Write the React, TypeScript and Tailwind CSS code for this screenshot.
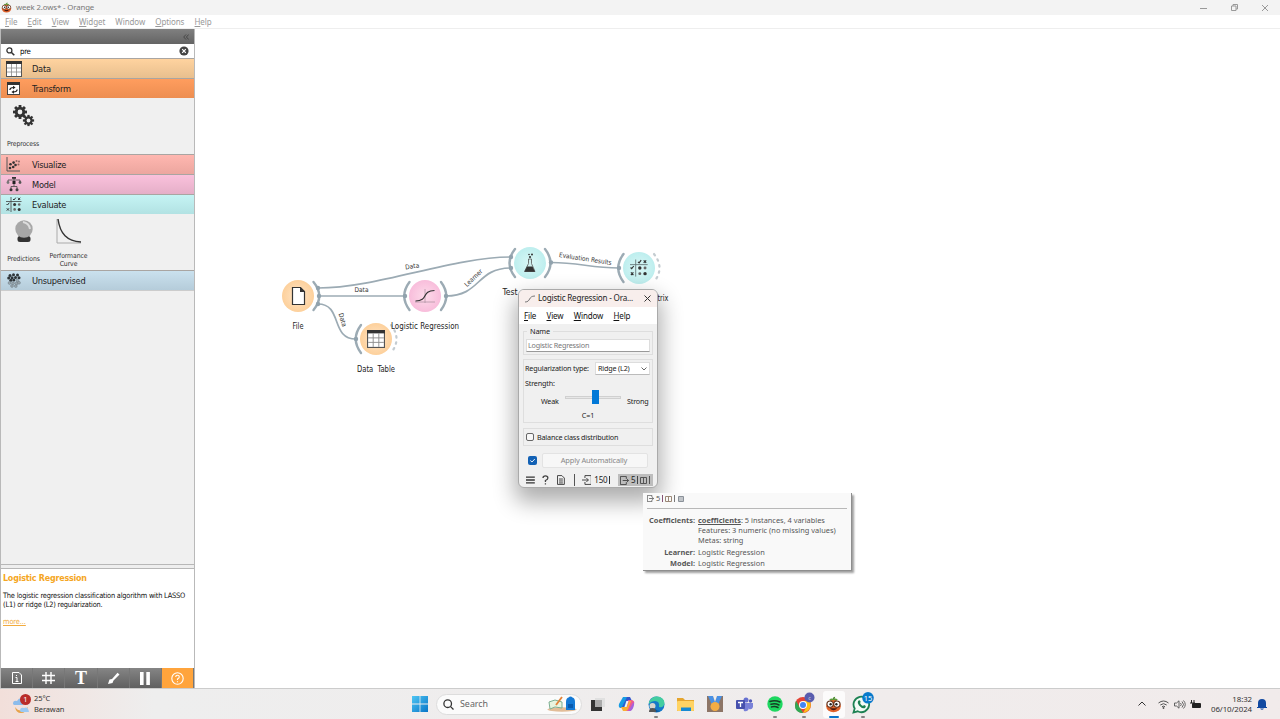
import React from "react";

const inkColor = "#333333";

function PumpkinLogo({ size }: { size: number }) {
  return (
    <svg width={size} height={size} viewBox="0 0 20 20" className="shrink-0">
      <path d="M9 4 Q9 1 12 1 L11 5 Z" fill="#4b8a2f" />
      <path d="M5 4 Q8 2 10 4 Q12 2 15 4 L13 6 H7 Z" fill="#5c9a3a" />
      <ellipse cx="10" cy="12" rx="8.6" ry="7.2" fill="#e0622a" />
      <circle cx="6" cy="9.5" r="3.7" fill="#fff" stroke="#5a2c18" strokeWidth="1.3" />
      <circle cx="14" cy="9.5" r="3.7" fill="#fff" stroke="#5a2c18" strokeWidth="1.3" />
      <circle cx="6.6" cy="9.7" r="1.4" fill="#222" />
      <circle cx="13.4" cy="9.7" r="1.4" fill="#222" />
      <path d="M5.5 14.5 Q10 19 14.5 14.5 Z" fill="#4a1a10" />
    </svg>
  );
}

function TableIcon({ size }: { size: number }) {
  return (
    <svg width={size} height={size} viewBox="0 0 16 16">
      <rect x=".5" y=".5" width="15" height="15" fill="#fff" stroke="#555" />
      <rect x="0" y="0" width="16" height="3" fill="#333" />
      <path d="M5.5 3V15M10.5 3V15M1 7H15M1 11H15" stroke="#8a8a8a" strokeWidth=".8" />
    </svg>
  );
}

function TransformIcon() {
  return (
    <svg width="13" height="13" viewBox="0 0 13 13">
      <rect x=".5" y=".5" width="12" height="12" fill="#fff" stroke="#444" />
      <rect width="13" height="3" fill="#333" />
      <path d="M2.800 8Q3 5.600 6.500 5.500M10.200 7.500Q10 9.900 6.500 10" fill="none" stroke="#222" strokeWidth="1.2" />
      <path d="M6 3.800L8.600 5.500L6 7.200ZM7 8.300L4.400 10L7 11.700Z" fill="#222" />
    </svg>
  );
}

function VisualizeIcon() {
  return (
    <svg width="15" height="15" viewBox="0 0 15 15">
      <path d="M1 0V14H14" fill="none" stroke="#555" strokeWidth="1" />
      {[[4, 11], [4.5, 7.3], [7.2, 10], [7.6, 5.6], [9.5, 8]].map(([x, y]) => (
        <circle key={`${x}${y}`} cx={x} cy={y} r="1.3" fill="#333" />
      ))}
      {[[10.5, 4], [13, 4.5], [12.5, 7.5]].map(([x, y]) => (
        <circle key={`${x}${y}`} cx={x} cy={y} r="1" fill="#8b6663" />
      ))}
    </svg>
  );
}

function ModelIcon() {
  return (
    <svg width="16" height="15" viewBox="0 0 16 15">
      <path d="M8 1V5M2 5V3H14V5M8 6V9M5 12V9.5H11V12" fill="none" stroke="#444" strokeWidth=".8" />
      <rect x="6" y="0" width="4" height="1.800" fill="#333" />
      <circle cx="2" cy="5.500" r="1.400" fill="#777" />
      <rect x="6.500" y="4" width="3" height="3" fill="#222" />
      <circle cx="14" cy="5.500" r="1.400" fill="#555" />
      <circle cx="5" cy="12.700" r="1.500" fill="#333" />
      <circle cx="11" cy="12.700" r="1.500" fill="#444" />
    </svg>
  );
}

function ConfusionGlyph({ framed = false }: { framed?: boolean }) {
  return (
    <g fill="none" stroke="#333" strokeWidth="1">
      <path d="M5 0V15M0 4.500H15.500" stroke={framed ? "#66797a" : "#444"} strokeWidth=".8" />
      <path d="M7 2L8 3L9.800 .6M.5 7L1.500 8L3.300 5.700M12 .7L14.200 3M14.200 .7L12 3M.8 11.300L3 13.600M3 11.300L.8 13.600" />
      <g fill="#333" stroke="none">
        <circle cx="8.600" cy="7.500" r="1.500" />
        <circle cx="13.200" cy="7.500" r="1.300" fill="#666" />
        <circle cx="8.600" cy="12.400" r="1.300" fill="#666" />
        <circle cx="13.200" cy="12.400" r="1.500" />
      </g>
    </g>
  );
}

function EvaluateIcon() {
  return (
    <svg width="16" height="15" viewBox="0 0 16 15">
      <ConfusionGlyph />
    </svg>
  );
}

function UnsupervisedIcon() {
  return (
    <svg width="14" height="15" viewBox="0 0 14 15">
      {[[3, 2.5], [6.5, 1.7], [10.5, 2], [1.7, 5], [5, 4.7], [8.5, 4.5], [12, 4.8], [6.8, 7], [3.8, 7.2]].map(([x, y]) => (
        <circle key={`${x}-${y}`} cx={x} cy={y} r="1.5" fill="#2e3438" />
      ))}
      {[[10.3, 7.6], [2.5, 10], [6, 10.2], [9.5, 10.5], [12, 9.8], [5, 13], [8.8, 13.1]].map(([x, y]) => (
        <circle key={`${x}-${y}`} cx={x} cy={y} r="1.4" fill="#9aa8b0" stroke="#69757c" strokeWidth=".5" />
      ))}
    </svg>
  );
}

function Gear({ cx, cy, r }: { cx: number; cy: number; r: number }) {
  return (
    <g transform={`translate(${cx} ${cy})`} fill="#333">
      {[0, 45, 90, 135].map((a) => (
        <rect key={a} x={-r * 0.2} y={-r} width={r * 0.4} height={r * 2} transform={`rotate(${a})`} />
      ))}
      <circle r={r * 0.74} />
      <circle r={r * 0.34} fill="#f0f0f0" />
    </g>
  );
}

function CategoryRow({ label, icon, tone }: { label: string; icon: React.ReactNode; tone: string }) {
  return (
    <div className={`flex h-5 shrink-0 items-center border-t border-[#a9a5a2] ${tone}`}>
      <div className="flex w-[25px] justify-center">{icon}</div>
      <span className="pl-[6px] text-[9.2px] tracking-[-0.25px] text-[#222]">{label}</span>
    </div>
  );
}

function MenuWord({ word, underline = true }: { word: string; underline?: boolean }) {
  return (
    <span className="whitespace-nowrap">
      <span className={underline ? "underline underline-offset-1" : ""}>{word[0]}</span>
      {word.slice(1)}
    </span>
  );
}

function Sidebar() {
  return (
    <aside className="flex w-[195px] shrink-0 flex-col border-x border-[#b9b9b9] bg-[#f0f0f0]">
      <div className="flex h-[15px] shrink-0 items-center justify-end bg-linear-to-b from-[#808080] to-[#646464] pr-[5px]">
        <svg width="6" height="6" viewBox="0 0 6 6" fill="none" stroke="#424242" strokeWidth=".9"><path d="M3 .5L.7 3L3 5.500M5.700 .5L3.400 3L5.700 5.500" /></svg>
      </div>
      <div className="flex h-[14px] shrink-0 items-center bg-white pr-[5px] pl-[5px]">
        <svg width="9" height="9" viewBox="0 0 9 9"><circle cx="3.400" cy="3.400" r="2.500" fill="none" stroke="#333" strokeWidth="1.300" /><path d="M5.200 5.200L8.300 8.300" stroke="#333" strokeWidth="1.600" /></svg>
        <span className="grow pt-px pl-[5px] text-[7.800px] tracking-[-0.3px]">pre</span>
        <svg width="10" height="10" viewBox="0 0 10 10"><circle cx="5" cy="5" r="4.600" fill="#444" /><path d="M3.200 3.200L6.800 6.800M6.800 3.200L3.200 6.800" stroke="#fff" strokeWidth="1.200" /></svg>
      </div>
      <CategoryRow label="Data" icon={<TableIcon size={16} />} tone="bg-linear-to-b from-[#ffd39f] to-[#e8bf8e]" />
      <CategoryRow label="Transform" icon={<TransformIcon />} tone="bg-linear-to-b from-[#ff9d5e] to-[#ed8e51]" />
      <div className="flex h-14 shrink-0 flex-col items-start pt-[6px] pl-[5px]">
        <svg width="34" height="24" viewBox="0 0 34 24"><Gear cx={14} cy={8} r={7} /><Gear cx={22.5} cy={16.5} r={5.6} /></svg>
        <span className="pt-[11px] pl-px text-[6.800px] tracking-[-0.1px] text-[#333]">Preprocess</span>
      </div>
      <CategoryRow label="Visualize" icon={<VisualizeIcon />} tone="bg-linear-to-b from-[#ffb7b0] to-[#eca69f]" />
      <CategoryRow label="Model" icon={<ModelIcon />} tone="bg-linear-to-b from-[#fac1dc] to-[#e5afc8]" />
      <CategoryRow label="Evaluate" icon={<EvaluateIcon />} tone="bg-linear-to-b from-[#c5f4f4] to-[#b2e2e3]" />
      <div className="flex h-14 shrink-0 text-center text-[6.800px] leading-[8px] tracking-[-0.08px] text-[#333]">
        <div className="flex w-[45px] flex-col items-center pt-[6px]">
          <svg width="20" height="23" viewBox="0 0 20 23"><rect x="3.500" y="16" width="13" height="6" rx="2.500" fill="#333" /><circle cx="10" cy="9" r="8.700" fill="#a7a7a7" /><path d="M9 2Q15 3 16 9" fill="none" stroke="#ddd" strokeWidth="2" /></svg>
          <span className="pt-[12px]">Predictions</span>
        </div>
        <div className="flex w-[45px] flex-col items-center pt-[5px]">
          <svg width="25" height="25" viewBox="0 0 25 25"><path d="M1 0V24H25" fill="none" stroke="#aaa" /><path d="M2 0C4 15 11 22 25 23" fill="none" stroke="#333" strokeWidth="1.400" /></svg>
          <span className="pt-[8px]">Performance Curve</span>
        </div>
      </div>
      <CategoryRow label="Unsupervised" icon={<UnsupervisedIcon />} tone="bg-linear-to-b from-[#cae1ee] to-[#b5ccda]" />
      <div className="grow border-t border-[#ccc]" />
      <div className="h-[5px] shrink-0 border-y border-[#b7b7b7] bg-[#eee]" />
      <div className="flex h-[99px] shrink-0 flex-col bg-white px-[2px] pt-[3px] text-[7.400px] leading-[9px] tracking-[-0.21px] text-[#111]">
        <h2 className="text-[8.900px] leading-[12px] font-bold tracking-[-0.22px] text-[#f5a623]">Logistic Regression</h2>
        <p className="pt-[7px] whitespace-nowrap">The logistic regression classification algorithm with LASSO<br />(L1) or ridge (L2) regularization.</p>
        <a className="pt-[8px] tracking-[-0.1px] text-[#f2ab3e] underline">more...</a>
      </div>
      <div className="grid h-5 shrink-0 grid-cols-6 bg-linear-to-b from-[#858585] to-[#606060] text-white [&>div]:flex [&>div]:items-center [&>div]:justify-center [&>div]:border-r [&>div]:border-[#777]">
        <div><svg width="10" height="12" viewBox="0 0 10 12" fill="none" stroke="#fff"><path d="M.5 .5H7L9.500 3V11.500H.5ZM3.500 9.500H6.500M3.500 5.500H5V9.500" /><path d="M4.500 3V4" /></svg></div>
        <div><svg width="13" height="12" viewBox="0 0 13 12" stroke="#fff" strokeWidth="1.400"><path d="M4 0V12M9 0V12M0 3.500H13M0 8.500H13" /></svg></div>
        <div className="font-['Liberation_Serif',serif] text-[18px] leading-none font-bold">T</div>
        <div><svg width="13" height="13" viewBox="0 0 13 13"><path d="M1 12L2.500 7.500L5 7L10.500 .8L12.500 2.600L6.500 8.500L5.500 11Z" fill="#fff" /></svg></div>
        <div><svg width="10" height="13" viewBox="0 0 10 13" fill="#fff"><rect width="3.600" height="13" /><rect x="6.300" width="3.600" height="13" /></svg></div>
        <div className="bg-[#ffa43c]"><svg width="13" height="13" viewBox="0 0 13 13" fill="none" stroke="#fff" strokeWidth="1.100"><circle cx="6.500" cy="6.500" r="5.700" /><path d="M4.700 5Q4.700 3.300 6.500 3.300T8.300 5Q8.300 6 6.500 7V8M6.500 9.200V10.300" /></svg></div>
      </div>
    </aside>
  );
}

function WorkflowCanvas() {
  const arc = { fill: "none", stroke: "#9cabb4", strokeWidth: 2.4, strokeLinecap: "round" as const };
  return (
    <svg className="block h-full w-full" viewBox="195 29 1085 659">
      <defs>
        <radialGradient id="orange"><stop offset="0" stopColor="#ffe6c9" /><stop offset="1" stopColor="#fdd09b" /></radialGradient>
        <radialGradient id="pink"><stop offset="0" stopColor="#fddbea" /><stop offset="1" stopColor="#f8bddb" /></radialGradient>
        <radialGradient id="aqua"><stop offset="0" stopColor="#daf7f6" /><stop offset="1" stopColor="#bdeeee" /></radialGradient>
      </defs>
      <g fill="none" stroke="#9cabb4" strokeWidth="1.700">
        <path d="M318 288C378 288 452 257 511 257" />
        <path d="M319 296H405" />
        <path d="M318 304C343 304 330 339 356 339" />
        <path d="M446 296C481 296 476 268 511 268" />
        <path d="M551 262.500C580 262.500 590 268 619 268" />
      </g>
      <g {...arc}>
        <path d="M313.500 282Q325 296 313.500 310" />
        <path d="M409.500 282Q399 296 409.500 310M441 282Q451.500 296 441 310" />
        <path d="M361 325Q350.500 339 361 353" />
        <path d="M515 249Q504 263 515 277M545 249Q556 263 545 277" />
        <path d="M623.500 254Q613 268 623.500 282" />
        <path d="M391 325Q402 339 391 353M654 254Q665 268 654 282" strokeDasharray="1.500 4.700" strokeWidth="2.200" stroke="#c4ccd1" />
      </g>
      <g fill="#91a2ad">
        {[[318, 288], [319, 296], [318, 304], [405, 296], [446, 296], [356, 339], [511, 257], [511, 268], [551, 262.5], [619, 268]].map(([x, y]) => (
          <circle key={`${x},${y}`} cx={x} cy={y} r="2.2" />
        ))}
      </g>
      <circle cx="298" cy="296" r="16" fill="url(#orange)" />
      <circle cx="425" cy="296" r="16" fill="url(#pink)" />
      <circle cx="376" cy="339" r="16" fill="url(#orange)" />
      <circle cx="530" cy="263" r="16" fill="url(#aqua)" />
      <circle cx="639" cy="268" r="16" fill="url(#aqua)" />
      <path d="M292.500 287.500H300.500L304.500 291.500V304.500H292.500Z" fill="#fff" stroke="#333" strokeWidth="1.200" />
      <path d="M300 287V292H305Z" fill="#333" />
      <path d="M415 302H435M425 289V303" stroke="#b296a5" strokeWidth=".8" />
      <path d="M415.500 301C429 301 421 290.500 434.500 290.500" fill="none" stroke="#333" strokeWidth="1.200" />
      <svg x="367" y="330" width="18" height="18"><TableIcon size={18} /></svg>
      <path d="M528.500 259H531.500V263.500L535 271.500H524.500L528.500 263.500Z" fill="#cfeeed" stroke="#555" strokeWidth=".8" />
      <path d="M527 266.500H532.500L535 271.700H524.500Z" fill={inkColor} />
      <circle cx="530" cy="257" r="1.100" fill={inkColor} /><circle cx="532" cy="254.500" r="1" fill={inkColor} /><circle cx="529" cy="254.500" r=".8" fill={inkColor} />
      <g transform="translate(630 259.500) scale(1.14)"><ConfusionGlyph framed /></g>
      <g fontSize="8" fill="#222" textAnchor="middle">
        <text x="298" y="328.500" textLength="11" lengthAdjust="spacingAndGlyphs">File</text>
        <text x="425" y="328.500" textLength="68" lengthAdjust="spacingAndGlyphs">Logistic Regression</text>
        <text x="376" y="371.500" textLength="38" lengthAdjust="spacingAndGlyphs">Data&nbsp; Table</text>
        <text x="502.500" y="295" textAnchor="start" textLength="15" lengthAdjust="spacingAndGlyphs">Test</text>
        <text x="668.500" y="300.500" textAnchor="end" textLength="11" lengthAdjust="spacingAndGlyphs">trix</text>
      </g>
      <g fontSize="6.500" fill="#333" textAnchor="middle">
        <text transform="translate(412.500 268.500) rotate(-8)" textLength="14" lengthAdjust="spacingAndGlyphs">Data</text>
        <text x="361.500" y="291.500" textLength="14" lengthAdjust="spacingAndGlyphs">Data</text>
        <text transform="translate(340.500 320.500) rotate(73)" textLength="14" lengthAdjust="spacingAndGlyphs">Data</text>
        <text transform="translate(475 279.500) rotate(-44)" textLength="22" lengthAdjust="spacingAndGlyphs">Learner</text>
        <text transform="translate(585 261) rotate(8.500)" textLength="53" lengthAdjust="spacingAndGlyphs">Evaluation Results</text>
      </g>
    </svg>
  );
}

function OutputGlyph({ output = false, size = 10 }: { output?: boolean; size?: number }) {
  return (
    <svg width={size} height={size} viewBox="0 0 10 10" fill="none" stroke="#444" strokeWidth="1">
      {output ? <path d="M7 3V.5H.5V9.500H7V7M3 5H9.500M7.500 3L9.500 5L7.500 7" /> : <path d="M3 3V.5H9.500V9.500H3V7M0 5H6.500M4.500 3L6.500 5L4.500 7" />}
    </svg>
  );
}

function SettingsDialog() {
  return (
    <section className="absolute top-[289px] left-[518px] flex h-[199px] w-[140px] flex-col overflow-hidden rounded-[6px] border border-[#aaa] bg-[#f0f0f0] text-[7.200px] tracking-[-0.17px] text-[#222] shadow-[0_11px_22px_3px_rgba(0,0,0,0.32)]">
      <header className="flex h-[17px] shrink-0 items-center bg-[#f8eeec] pr-[6px] pl-[6px]">
        <svg width="10" height="8" viewBox="0 0 10 8"><path d="M0 7C6 7 3 1 10 1" fill="none" stroke="#777" /></svg>
        <span className="grow pl-[3px] text-[8.100px] tracking-[-0.2px] whitespace-nowrap">Logistic Regression - Ora...</span>
        <svg width="7" height="7" viewBox="0 0 7 7" stroke="#333"><path d="M.5 .5L6.500 6.500M6.500 .5L.5 6.500" /></svg>
      </header>
      <nav className="flex h-[17px] shrink-0 items-center gap-[10.300px] bg-white pl-[5px] text-[8px] tracking-[-0.15px] text-[#111]">
        <MenuWord word="File" /><MenuWord word="View" /><MenuWord word="Window" /><MenuWord word="Help" />
      </nav>
      <div className="flex grow flex-col px-[4px]">
        <fieldset className="mt-[3px] h-[28px] border border-[#dedede] px-[2px]">
          <legend className="ml-[1px] px-[3px] text-[7.300px] leading-[8px]">Name</legend>
          <div className="mt-[4px] flex h-[13px] items-center border border-[#ddd] border-b-[#999] bg-white px-px text-[7.200px] tracking-[-0.2px] text-[#777]">Logistic Regression</div>
        </fieldset>
        <div className="mt-[4px] flex h-[64px] shrink-0 flex-col border border-[#dedede] px-[1px]">
          <div className="mt-[2px] flex h-[13px] items-center justify-between">
            <span>Regularization type:</span>
            <div className="mr-px flex h-[13px] w-[55px] items-center justify-between border border-[#ddd] border-b-[#bbb] bg-white px-[2px]">
              <span>Ridge (L2)</span>
              <svg width="6" height="4" viewBox="0 0 6 4" fill="none" stroke="#666"><path d="M.5 .5L3 3L5.500 .5" /></svg>
            </div>
          </div>
          <span className="mt-[3px] leading-[10px]">Strength:</span>
          <div className="flex h-[18px] items-center pl-[16px]">
            <span className="w-[24px] pt-[8px]">Weak</span>
            <div className="flex h-[3px] w-[56px] items-center justify-center border border-[#d0d0d0] bg-[#e7e7e7] pl-[5px]"><div className="h-[14px] w-[7px] shrink-0 bg-[#0078d7]" /></div>
            <span className="pt-[8px] pl-[6px]">Strong</span>
          </div>
          <span className="pt-[4px] text-center leading-[10px]">C=1</span>
        </div>
        <label className="mt-[5px] flex h-[18px] shrink-0 items-center gap-[3px] border border-[#dedede] pl-[2px]">
          <span className="h-[8px] w-[8px] rounded-[2px] border border-[#666] bg-[#f8f8f8]" />Balance class distribution
        </label>
        <div className="mt-[7px] flex h-[15px] shrink-0 items-center gap-[5px] pl-[5px]">
          <svg width="9" height="9" viewBox="0 0 9 9"><rect width="9" height="9" rx="2" fill="#1261b5" /><path d="M2.300 4.500L4 6L6.800 3" fill="none" stroke="#fff" strokeWidth=".9" /></svg>
          <div className="flex h-[15px] w-[106px] items-center justify-center rounded-xs border border-[#e3e3e3] bg-[#f7f7f7] pr-[2px] text-[7.500px] tracking-[-0.17px] text-[#888]">Apply Automatically</div>
        </div>
        <footer className="mt-[5px] flex h-[14px] shrink-0 items-center pl-[3px] text-[8px]">
          <svg width="9" height="8" viewBox="0 0 9 8" stroke="#333" strokeWidth="1.400"><path d="M0 1H9M0 4H9M0 7H9" /></svg>
          <svg className="ml-[7px]" width="7" height="10" viewBox="0 0 7 10" fill="none" stroke="#444" strokeWidth="1.300"><path d="M1 3Q1 .8 3.500 .8T6 3Q6 4.500 3.500 5.500V7M3.500 8.300V9.700" /></svg>
          <svg className="ml-[8px]" width="8" height="10" viewBox="0 0 8 10" fill="none" stroke="#444"><path d="M.5 .5H5L7.500 3V9.500H.5ZM2 4H6M2 6H6M2 8H6" /></svg>
          <span className="mr-[7px] ml-[9px] h-[12px] w-px bg-[#555]" />
          <OutputGlyph /><span className="ml-[3px] w-[14px]">150</span><span className="ml-[1px] h-[8px] w-px bg-[#333]" />
          <div className="ml-[8px] flex h-[12px] w-[35px] shrink-0 items-center gap-[2px] bg-[#bdbdbd] pl-[2px]">
            <OutputGlyph output size={9} /><span>5</span><span className="h-[8px] w-px bg-[#444]" />
            <svg width="7" height="7" viewBox="0 0 7 7" fill="none" stroke="#555"><path d="M.5 .5H6.500V6.500H.5ZM3.500 1V6" /></svg>
            <span className="h-[8px] w-px bg-[#555]" />
          </div>
        </footer>
      </div>
    </section>
  );
}

function OutputTooltip() {
  return (
    <section className="absolute top-[493px] left-[643px] h-[78px] w-[209px] border-r border-b border-[#8e8e8e] bg-[#f9f9f9] px-[4px] text-[7.400px] text-[#575757] shadow-[2px_2px_2px_rgba(0,0,0,0.38)]">
      <div className="flex h-[16px] items-center gap-[2px] border-b border-[#b8b8b8] pb-[4px]">
        <OutputGlyph output size={7} /><span>5</span><span className="h-[7px] w-px bg-[#865475]" />
        <svg width="7" height="6" viewBox="0 0 7 6" fill="none" stroke="#9b8877"><path d="M.5 .5H6.500V5.500H.5ZM3.500 1V5" /></svg>
        <span className="h-[7px] w-px bg-[#777]" />
        <svg className="ml-px" width="6" height="6" viewBox="0 0 6 6" fill="none" stroke="#8a9199"><path d="M.5 .5H5.500V5.500H.5ZM1 2H5M1 4H5" /></svg>
      </div>
      <div className="mt-[6px] grid grid-cols-[48px_1fr] gap-x-[3px] leading-[10px] whitespace-nowrap">
        <b className="text-right">Coefficients:</b><span><b className="underline">coefficients</b>: 5 instances, 4 variables</span>
        <span /><span className="tracking-[0.02px]">Features: 3 numeric (no missing values)</span>
        <span /><span>Metas: string</span>
        <b className="mt-[2px] text-right">Learner:</b><span className="mt-[2px]">Logistic Regression</span>
        <b className="mt-px text-right">Model:</b><span className="mt-px">Logistic Regression</span>
      </div>
    </section>
  );
}

function TaskSlot({ children, running = false, active = false }: { children: React.ReactNode; running?: boolean; active?: boolean }) {
  return (
    <div className={`relative flex h-[27px] w-[22px] items-center justify-center rounded-[3px] ${active ? "bg-white/80" : ""}`}>
      {children}
      {running && <span className={`absolute bottom-0 h-[2px] rounded-full ${active ? "w-[10px] bg-[#0b74ca]" : "w-[4px] bg-[#858585]"}`} />}
    </div>
  );
}

function Taskbar() {
  return (
    <footer className="flex h-[31px] shrink-0 items-center border-t border-[#ccc] bg-linear-to-r from-[#f2dfda] via-[#eeeeee] via-12% to-[#f1ebeb] font-['Noto_Sans',sans-serif]">
      <div className="flex w-[412px] items-center pl-[12px] text-[7.500px] leading-[11px] text-[#333]">
        <svg className="mb-px" width="20" height="20" viewBox="0 0 20 20"><path d="M1 10Q1 6 5 7Q8 2 11 6V11H2Z" fill="#8cbceb" /><path d="M3 13Q8 20 16 13Q14 19 9 19Q4 19 3 13Z" fill="#e6a34a" /><path d="M8 17Q8 13 12 14Q16 12 17 18H9Z" fill="#9bc9f4" /><circle cx="13.500" cy="5.500" r="5.500" fill="#b92c29" /><text x="13.500" y="8.200" fontSize="7.500" textAnchor="middle" fill="#fff">1</text></svg>
        <div className="pl-[2px] tracking-[-0.1px]">25°C<br />Berawan</div>
      </div>
      <svg width="16" height="16" viewBox="0 0 16 16"><defs><linearGradient id="win" x2="1" y2="1"><stop stopColor="#4fc6f3" /><stop offset="1" stopColor="#0876c8" /></linearGradient></defs><path d="M0 0H7.600V7.600H0ZM8.400 0H16V7.600H8.400ZM0 8.400H7.600V16H0ZM8.400 8.400H16V16H8.400Z" fill="url(#win)" /></svg>
      <div className="ml-[8px] flex h-[21px] w-[146px] items-center rounded-full border border-[#ddd] bg-[#fbfbfb] pr-[3px] pl-[6px]">
        <svg width="11" height="11" viewBox="0 0 11 11" fill="none" stroke="#333" strokeWidth="1.300"><circle cx="4.700" cy="4.700" r="3.800" /><path d="M7.600 7.600L10.500 10.500" /></svg>
        <span className="grow pl-[6px] text-[8.900px] text-[#666]">Search</span>
        <svg width="31" height="16" viewBox="0 0 31 16"><ellipse cx="15" cy="13.500" rx="14.500" ry="2.200" fill="#e2bd98" /><path d="M2 6L8 4L15 6V12L8 11L3 13Z" fill="#e8f4df" stroke="#7cae91" /><path d="M9 9L15 1" stroke="#e2843a" strokeWidth="1.800" /><path d="M19 14V6Q19 2 21.500 1.500Q23.500-.5 25.500 1.500Q28 2 28 6V14Z" fill="#1479d5" /><path d="M21 8H26V12H21Z" fill="#0859ad" /></svg>
      </div>
      <div className="flex items-center gap-[7.600px] pl-[4px]">
        <TaskSlot><svg width="15" height="15" viewBox="0 0 15 15"><rect x="5" y="1" width="10" height="9" fill="#e0e0e0" /><rect x="1" y="3" width="11" height="11" fill="#333" /><rect x="5" y="3" width="7" height="7" fill="#aaa" /></svg></TaskSlot>
        <TaskSlot><svg width="17" height="16" viewBox="0 0 17 16"><path d="M5 1H10L7 12H3Q0 12 1 8Z" fill="#169ce4" /><path d="M9 1H12L14 5H8L6 11H2Q4 12 5 9Z" fill="#3355cb" /><path d="M12 15H7L10 4H14Q17 5 16 8L14 13Z" fill="#ed5a91" /><path d="M8 15H5L3 11H9L11 5H15Q13 4 12 8L10 13Q9 15 8 15Z" fill="#f9af33" /><path d="M10.300 15L15.500 6Q17 8 15.500 11Q14 15 12 15Z" fill="#a563dc" /><path d="M6.500 11L8.500 5H10.500L8.500 11Z" fill="#f4f4f4" /></svg></TaskSlot>
        <TaskSlot running><svg width="17" height="17" viewBox="0 0 17 17"><circle cx="8.500" cy="8.500" r="8" fill="#1479c8" /><path d="M1 6Q4 0 9 .5Q16 1 16.500 7Q16 12 11 11Q12 5 7 5Q3 5 1 8Z" fill="#43cda0" /><path d="M6 8Q5 14 12 15Q5 18 2 12Z" fill="#075399" /><circle cx="4.500" cy="10" r="3" fill="#d7d5ce" /><path d="M1 16Q1 12 4.500 12T8 16Z" fill="#555" /></svg></TaskSlot>
        <TaskSlot><svg width="17" height="15" viewBox="0 0 17 15"><path d="M0 1H6L8 3H17V14H0Z" fill="#e5a52e" /><rect y="4" width="17" height="10" rx="1" fill="#ffd363" /><path d="M4 10.500H14V14H4Z" fill="#168ad3" /></svg></TaskSlot>
        <TaskSlot><svg width="16" height="16" viewBox="0 0 16 16"><rect width="16" height="16" fill="#8d7566" /><path d="M1 0H6L8 6L10 0H15L11 9H5Z" fill="#4a91e5" /><path d="M6 0H10L8 6Z" fill="#eee" /><circle cx="8" cy="10.500" r="4.500" fill="#f3ad45" /></svg></TaskSlot>
        <TaskSlot><svg width="17" height="15" viewBox="0 0 17 15"><circle cx="10" cy="3" r="2.500" fill="#6670d0" /><circle cx="14.500" cy="4" r="1.700" fill="#5059ba" /><path d="M6 6H13V11Q12 15 8 14ZM13 6H17V10Q16 13 13 12Z" fill="#7981d8" /><rect y="3" width="9" height="9" rx="1" fill="#4650ad" /><path d="M2 5.500H7M4.500 5.500V10" stroke="#fff" strokeWidth="1.300" /></svg></TaskSlot>
        <TaskSlot running><svg width="16" height="16" viewBox="0 0 16 16"><circle cx="8" cy="8" r="7.700" fill="#1ed760" /><path d="M3 5.500Q8 3.700 13 6M4 8.300Q8 7 12 9M4.500 10.900Q8 9.700 11 11.500" fill="none" stroke="#173d24" strokeWidth="1.500" strokeLinecap="round" /></svg></TaskSlot>
        <TaskSlot running><svg className="mb-[3px]" width="21" height="22" viewBox="0 0 21 22"><circle cx="9" cy="13" r="8" fill="#e44335" /><path d="M2 9L6 17L9 21Q1 21 1 13Z" fill="#31a853" /><path d="M9 9H16Q19 18 9 21L13 14Z" fill="#fbc116" /><path d="M2 9L6 16L9 21Q3 20 1.500 16Z" fill="#31a853" /><circle cx="9" cy="13" r="4" fill="#fff" /><circle cx="9" cy="13" r="3" fill="#4285f4" /><circle cx="15.500" cy="5.500" r="5" fill="#595cae" /><text x="15.500" y="7.600" fontSize="5.500" textAnchor="middle" fill="#ddd">c</text></svg></TaskSlot>
        <TaskSlot running active><PumpkinLogo size={17} /></TaskSlot>
        <TaskSlot running><svg className="mb-[3px]" width="22" height="22" viewBox="0 0 22 22"><path d="M1.500 20.500L2.700 16.500A7.800 7.800 0 1 1 5.700 19.300Z" fill="#f4fbf6" stroke="#1c8152" strokeWidth="1.800" /><path d="M6 9Q8 7 8.700 10L8 11Q9 13.500 11 14L12 13Q15 14 13 16Q10 17 7 13.500Q5 11 6 9Z" fill="#1c8152" /><circle cx="16" cy="5.800" r="5.800" fill="#087acb" /><text x="16" y="8.500" fontSize="7.500" textAnchor="middle" fill="#fff">15</text></svg></TaskSlot>
      </div>
      <div className="ml-auto flex items-center pr-[13px] text-[#333]">
        <svg className="mr-[12px]" width="8" height="6" viewBox="0 0 8 6" fill="none" stroke="#333"><path d="M.5 4.500L4 1L7.500 4.500" /></svg>
        <svg width="11" height="9" viewBox="0 0 11 9" fill="none" stroke="#555"><path d="M.5 3Q5.500-1 10.500 3M2.300 5Q5.500 2.300 8.700 5M4 6.800Q5.500 5.500 7 6.800" /><circle cx="5.500" cy="8" r=".6" fill="#333" /></svg>
        <svg className="ml-[5px]" width="12" height="9" viewBox="0 0 12 9" fill="none" stroke="#555" strokeWidth=".9"><path d="M.5 3H2.500L5 .8V8.200L2.500 6H.5ZM6.500 3Q8 4.500 6.500 6M8 1.500Q11 4.500 8 7.500M9.500 .5Q13 4.500 9.500 8.500" /></svg>
        <svg className="ml-[4px]" width="12" height="9" viewBox="0 0 12 9"><rect x="2" y="3" width="9" height="5" rx="1" fill="#222" /><path d="M1.500 0V3M4 0V3M0 3H5V5L3 6V8" fill="none" stroke="#222" /></svg>
        <div className="mr-[5px] ml-[9px] text-right text-[7.900px] leading-[10.500px] tracking-[-0.1px]">18:32<br />06/10/2024</div>
        <svg width="10" height="12" viewBox="0 0 10 12" fill="#1149a1"><path d="M1 9V5Q1 1 5 1T9 5V9H10V10H0V9ZM3 10.500H7Q5 13 3 10.500Z" /></svg>
      </div>
    </footer>
  );
}

export default function App() {
  return (
    <main className="relative flex h-[719px] w-[1280px] flex-col overflow-hidden bg-white font-['DejaVu_Sans_Condensed','DejaVu_Sans',sans-serif] [font-stretch:condensed]">
      <header className="flex h-[15px] shrink-0 items-center bg-[#f3f3f3] pl-px font-['Noto_Sans',sans-serif] text-[8px] text-[#777]">
        <PumpkinLogo size={11} />
        <span className="grow pt-px pl-[4px] text-[7.800px] tracking-[-0.12px]">week 2.ows* - Orange</span>
        <div className="flex items-center gap-[23px] pr-[11px]">
          <svg width="8" height="8" viewBox="0 0 8 8" stroke="#999"><path d="M0 4.500H7" /></svg>
          <svg width="7" height="7" viewBox="0 0 7 7" fill="none" stroke="#999"><path d="M.5 2H5V6.500H.5ZM2 2V.5H6.500V5H5" /></svg>
          <svg width="8" height="8" viewBox="0 0 8 8" stroke="#999"><path d="M1 1L7 7M7 1L1 7" /></svg>
        </div>
      </header>
      <nav className="flex h-[14px] shrink-0 items-center gap-[10.200px] border-b border-[#eee] bg-white pt-px pl-[5px] font-['Noto_Sans',sans-serif] text-[8px] tracking-[-0.1px] text-[#999]">
        <MenuWord word="File" /><MenuWord word="Edit" /><MenuWord word="View" /><MenuWord word="Widget" /><MenuWord word="Window" underline={false} /><MenuWord word="Options" /><MenuWord word="Help" />
      </nav>
      <div className="flex min-h-0 grow">
        <Sidebar />
        <div className="min-w-0 grow overflow-hidden"><WorkflowCanvas /></div>
      </div>
      <Taskbar />
      <div className="font-['Noto_Sans',sans-serif]"><SettingsDialog /><OutputTooltip /></div>
    </main>
  );
}
